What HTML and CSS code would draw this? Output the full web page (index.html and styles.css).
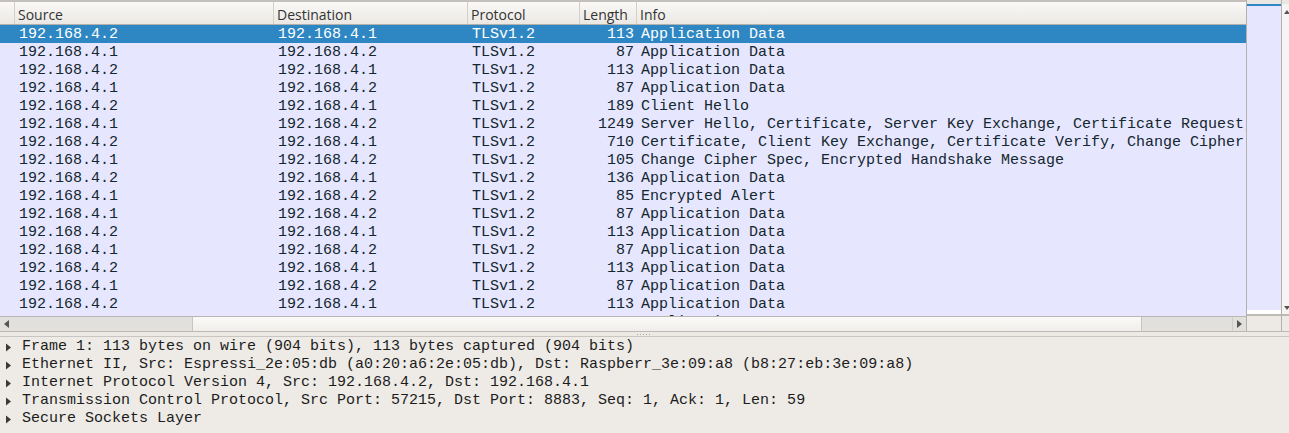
FILE: index.html
```html
<!DOCTYPE html>
<html>
<head>
<meta charset="utf-8">
<link rel="stylesheet" href="styles.css">
</head>
<body>
<div class="app">
  <div class="packets">
    <div class="list">
      <div class="hdr">
        <div class="hc"></div>
        <div class="hc">Source</div>
        <div class="hc">Destination</div>
        <div class="hc">Protocol</div>
        <div class="hc">Length</div>
        <div class="hc last">Info</div>
      </div>
      <div class="rows">
        <div class="row sel"><span></span><span>192.168.4.2</span><span>192.168.4.1</span><span>TLSv1.2</span><span class="num">113</span><span>Application Data</span></div>
        <div class="row"><span></span><span>192.168.4.1</span><span>192.168.4.2</span><span>TLSv1.2</span><span class="num">87</span><span>Application Data</span></div>
        <div class="row"><span></span><span>192.168.4.2</span><span>192.168.4.1</span><span>TLSv1.2</span><span class="num">113</span><span>Application Data</span></div>
        <div class="row"><span></span><span>192.168.4.1</span><span>192.168.4.2</span><span>TLSv1.2</span><span class="num">87</span><span>Application Data</span></div>
        <div class="row"><span></span><span>192.168.4.2</span><span>192.168.4.1</span><span>TLSv1.2</span><span class="num">189</span><span>Client Hello</span></div>
        <div class="row"><span></span><span>192.168.4.1</span><span>192.168.4.2</span><span>TLSv1.2</span><span class="num">1249</span><span>Server Hello, Certificate, Server Key Exchange, Certificate Request, Server Hello Done</span></div>
        <div class="row"><span></span><span>192.168.4.2</span><span>192.168.4.1</span><span>TLSv1.2</span><span class="num">710</span><span>Certificate, Client Key Exchange, Certificate Verify, Change Cipher Spec, Encrypted Handshake Message</span></div>
        <div class="row"><span></span><span>192.168.4.1</span><span>192.168.4.2</span><span>TLSv1.2</span><span class="num">105</span><span>Change Cipher Spec, Encrypted Handshake Message</span></div>
        <div class="row"><span></span><span>192.168.4.2</span><span>192.168.4.1</span><span>TLSv1.2</span><span class="num">136</span><span>Application Data</span></div>
        <div class="row"><span></span><span>192.168.4.1</span><span>192.168.4.2</span><span>TLSv1.2</span><span class="num">85</span><span>Encrypted Alert</span></div>
        <div class="row"><span></span><span>192.168.4.1</span><span>192.168.4.2</span><span>TLSv1.2</span><span class="num">87</span><span>Application Data</span></div>
        <div class="row"><span></span><span>192.168.4.2</span><span>192.168.4.1</span><span>TLSv1.2</span><span class="num">113</span><span>Application Data</span></div>
        <div class="row"><span></span><span>192.168.4.1</span><span>192.168.4.2</span><span>TLSv1.2</span><span class="num">87</span><span>Application Data</span></div>
        <div class="row"><span></span><span>192.168.4.2</span><span>192.168.4.1</span><span>TLSv1.2</span><span class="num">113</span><span>Application Data</span></div>
        <div class="row"><span></span><span>192.168.4.1</span><span>192.168.4.2</span><span>TLSv1.2</span><span class="num">87</span><span>Application Data</span></div>
        <div class="row"><span></span><span>192.168.4.2</span><span>192.168.4.1</span><span>TLSv1.2</span><span class="num">113</span><span>Application Data</span></div>
        <div class="row"><span></span><span>192.168.4.1</span><span>192.168.4.2</span><span>TLSv1.2</span><span class="num">87</span><span>Application Data</span></div>
      </div>
      <div class="hscroll">
        <div class="hbtn"><svg width="5" height="8" viewBox="0 0 5 8"><path d="M5 0 L0 4 L5 8 Z" fill="#555"/></svg></div>
        <div class="htrough"><div class="hthumb"></div></div>
        <div class="hbtn right"><svg width="5" height="8" viewBox="0 0 5 8"><path d="M0 0 L5 4 L0 8 Z" fill="#555"/></svg></div>
      </div>
    </div>
    <div class="map">
      <div class="map-top"></div>
      <div class="map-body"></div>
      <div class="map-empty"></div>
      <div class="map-corner"></div>
    </div>
    <div class="vscroll">
      <div class="vtop"></div>
      <div class="vtrack">
        <svg class="varrow" width="6" height="4" viewBox="0 0 6 4"><path d="M3 0 L6 4 L0 4 Z" fill="#555"/></svg>
        <svg class="varrow" width="6" height="4" viewBox="0 0 6 4"><path d="M0 0 L6 0 L3 4 Z" fill="#555"/></svg>
      </div>
    </div>
  </div>
  <div class="splitter"><span class="grip"></span></div>
  <div class="details">
    <div class="drow"><svg class="tri" width="5" height="9" viewBox="0 0 5 9"><path d="M0 0.5 L5 4.5 L0 8.5 Z" fill="#3a3a3a"/></svg><span>Frame 1: 113 bytes on wire (904 bits), 113 bytes captured (904 bits)</span></div>
    <div class="drow"><svg class="tri" width="5" height="9" viewBox="0 0 5 9"><path d="M0 0.5 L5 4.5 L0 8.5 Z" fill="#3a3a3a"/></svg><span>Ethernet II, Src: Espressi_2e:05:db (a0:20:a6:2e:05:db), Dst: Raspberr_3e:09:a8 (b8:27:eb:3e:09:a8)</span></div>
    <div class="drow"><svg class="tri" width="5" height="9" viewBox="0 0 5 9"><path d="M0 0.5 L5 4.5 L0 8.5 Z" fill="#3a3a3a"/></svg><span>Internet Protocol Version 4, Src: 192.168.4.2, Dst: 192.168.4.1</span></div>
    <div class="drow"><svg class="tri" width="5" height="9" viewBox="0 0 5 9"><path d="M0 0.5 L5 4.5 L0 8.5 Z" fill="#3a3a3a"/></svg><span>Transmission Control Protocol, Src Port: 57215, Dst Port: 8883, Seq: 1, Ack: 1, Len: 59</span></div>
    <div class="drow"><svg class="tri" width="5" height="9" viewBox="0 0 5 9"><path d="M0 0.5 L5 4.5 L0 8.5 Z" fill="#3a3a3a"/></svg><span>Secure Sockets Layer</span></div>
  </div>
</div>
</body>
</html>
```

FILE: styles.css
```css
html, body {
  margin: 0;
  padding: 0;
  background: #edeae6;
  overflow: hidden;
}
.app {
  width: 1289px;
  height: 433px;
  display: flex;
  flex-direction: column;
  overflow: hidden;
}
.packets {
  height: 331px;
  display: flex;
  overflow: hidden;
  flex: none;
}
.list {
  width: 1246px;
  flex: none;
  display: flex;
  flex-direction: column;
}
.hdr, .row {
  display: grid;
  grid-template-columns: 15px 259px 194px 112px 57px 609px;
}
.hdr {
  height: 22px;
  overflow: hidden;
  border-top: 2px solid #c4c1bc;
  border-bottom: 1px solid #b3b0ab;
  background: linear-gradient(#faf9f7, #ebe8e4);
  font-family: "Open Sans", "DejaVu Sans", sans-serif;
  font-size: 14px;
  line-height: 20px;
  color: #333333;
  flex: none;
}
.hc {
  height: 22px;
  box-sizing: border-box;
  border-right: 1px solid #d3d0cb;
  padding-left: 3px;
  padding-top: 3px;
  white-space: nowrap;
  overflow: hidden;
}
.hc.last {
  border-right: none;
}
.rows {
  height: 291px;
  overflow: hidden;
  background: #e7e6ff;
  flex: none;
}
.row {
  height: 18px;
  line-height: 20px;
  overflow: hidden;
  background: #e7e6ff;
  color: #12272e;
  font-family: "Liberation Mono", monospace;
  font-size: 15px;
}
.row span {
  padding: 0 3px 0 4px;
  white-space: pre;
  overflow: hidden;
}
.row span.num {
  text-align: right;
  padding: 0 3px 0 0;
}
.row.sel {
  background: #2e87c3;
  color: #ffffff;
}
.hscroll {
  height: 14px;
  border-top: 1px solid #bab7b2;
  display: flex;
  background: #e2e0dc;
  flex: none;
}
.hbtn {
  width: 13px;
  flex: none;
  display: flex;
  align-items: center;
  justify-content: center;
}
.hbtn.right {
  width: 13px;
  border-left: 1px solid #cfccc7;
}
.htrough {
  flex: 1;
  display: flex;
  padding-left: 179px;
}
.hthumb {
  width: 950px;
  box-sizing: border-box;
  border-left: 1px solid #c9c6c1;
  border-right: 1px solid #c9c6c1;
  background: linear-gradient(#fbfaf8, #f0eeeb);
}
.map {
  width: 34px;
  flex: none;
  border-left: 1px solid #b4b1ac;
  border-right: 1px solid #b4b1ac;
  display: flex;
  flex-direction: column;
}
.map-top {
  height: 4px;
  background: #e9e7e3;
}
.map-body {
  height: 304px;
  border-top: 2px solid #2e87c3;
  background: #e7e6ff;
}
.map-empty {
  height: 4px;
  background: #ffffff;
  border-bottom: 2px solid #bebbb6;
}
.map-corner {
  flex: 1;
  background: #edeae6;
}
.vscroll {
  width: 14px;
  flex: none;
  display: flex;
  flex-direction: column;
}
.vtop {
  height: 4px;
  background: #e9e7e3;
}
.vtrack {
  height: 312px;
  background: #f6f5f3;
  border-bottom: 2px solid #bebbb6;
  display: flex;
  flex-direction: column;
  justify-content: space-between;
  padding: 6px 0 4px 2px;
  box-sizing: border-box;
}
.varrow {
  display: block;
}
.splitter {
  height: 4px;
  border-top: 1px solid #bcb9b4;
  display: flex;
  justify-content: center;
  align-items: center;
  flex: none;
}
.grip {
  width: 15px;
  height: 1px;
  background: repeating-linear-gradient(90deg, #aaa7a2 0 1px, transparent 1px 3px);
}
.details {
  flex: 1;
  border-top: 1px solid #c9c6c1;
  padding-top: 1px;
  background: #eeebe7;
  font-family: "Liberation Mono", monospace;
  font-size: 15px;
  color: #1c1c1c;
}
.drow {
  height: 18px;
  line-height: 18px;
  display: flex;
  align-items: center;
  white-space: pre;
}
.tri {
  margin-left: 6px;
  margin-right: 11px;
  flex: none;
}
```
